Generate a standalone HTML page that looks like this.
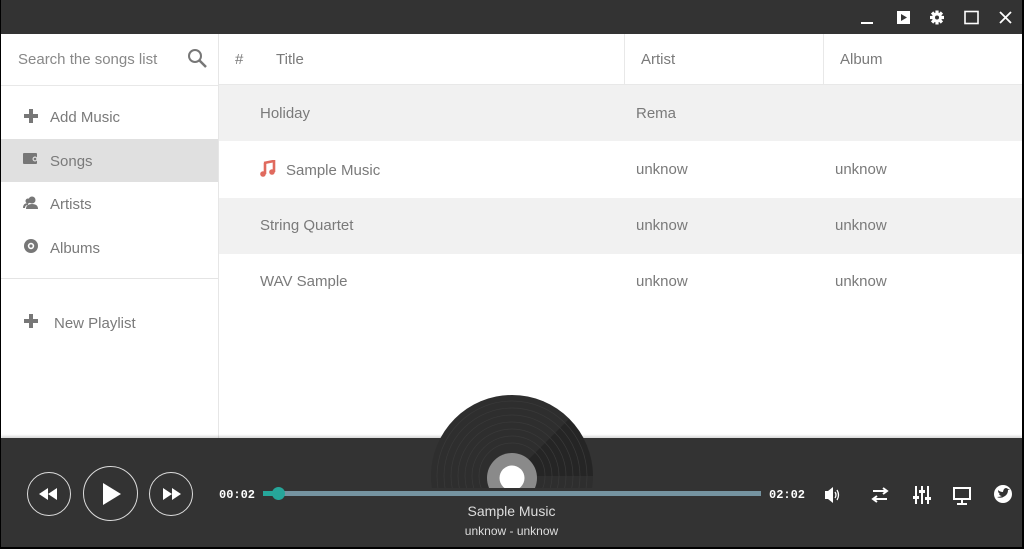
<!DOCTYPE html>
<html><head><meta charset="utf-8"><style>
*{margin:0;padding:0;box-sizing:border-box}
body{width:1024px;height:549px;overflow:hidden;background:#000;font-family:"Liberation Sans",sans-serif;position:relative}
.win{position:absolute;left:1px;top:0;width:1021px;height:547px;background:#fff;overflow:hidden}
.top{position:absolute;left:0;top:0;width:100%;height:34px;background:#333}
.side{position:absolute;left:0;top:34px;width:218px;height:404px;border-right:1px solid #e6e6e6;background:#fff}
.t{position:absolute;color:#7a7a7a;font-size:15px;white-space:nowrap;margin-top:1px}
.hdr{position:absolute;top:34px;height:51px;left:0;width:100%;border-bottom:1px solid #e8e8e8}
.row{position:absolute;left:218px;width:803px;height:56px}
.player{position:absolute;left:0;top:438px;width:100%;height:109px;background:#333;box-shadow:0 -2px 2px rgba(0,0,0,.15)}
.circ{position:absolute;border:1.5px solid #ddd;border-radius:50%}
</style></head><body>
<div class="win">
<div class="top">
 <svg style="position:absolute;left:855px;top:8px" width="160" height="20">
  <rect x="5" y="14" width="12" height="2" fill="#fff"/>
  <rect x="41" y="3" width="13" height="13" fill="#fff"/><path d="M45 6 L51 9.5 L45 13Z" fill="#333"/>
  <g transform="translate(81,9.5)" fill="#fff"><circle r="5"/><g><rect x="-1.6" y="-7" width="3.2" height="14"/><rect x="-1.6" y="-7" width="3.2" height="14" transform="rotate(45)"/><rect x="-1.6" y="-7" width="3.2" height="14" transform="rotate(90)"/><rect x="-1.6" y="-7" width="3.2" height="14" transform="rotate(135)"/></g><circle r="2" fill="#333"/></g>
  <rect x="109" y="3.5" width="13" height="12" fill="none" stroke="#fff" stroke-width="1.6"/>
  <path d="M144 4 L155 15 M155 4 L144 15" stroke="#fff" stroke-width="1.8"/>
 </svg>
</div>
<div class="hdr"></div>
<div class="side">
 <div class="t" style="left:17px;top:16px;color:#888">Search the songs list</div>
 <svg style="position:absolute;left:186px;top:14px" width="22" height="22"><circle cx="8" cy="8" r="6" fill="none" stroke="#777" stroke-width="2"/><path d="M12.5 12.5 L19 19" stroke="#777" stroke-width="2.5"/></svg>
 <div style="position:absolute;left:0;top:51px;width:217px;border-top:1px solid #e8e8e8"></div>
 <svg style="position:absolute;left:22px;top:74px" width="16" height="16"><path d="M6 1h4v5h5v4h-5v5h-4v-5h-5v-4h5z" fill="#777"/></svg>
 <div class="t" style="left:49px;top:74px">Add Music</div>
 <div style="position:absolute;left:0;top:105px;width:217px;height:43px;background:#e0e0e0"></div>
 <svg style="position:absolute;left:22px;top:117px" width="16" height="16"><rect x="0" y="2" width="14" height="11" rx="1" fill="#777"/><circle cx="12" cy="8" r="2.5" fill="#e0e0e0"/><circle cx="12" cy="8" r="1.3" fill="#777"/></svg>
 <div class="t" style="left:49px;top:118px">Songs</div>
 <svg style="position:absolute;left:22px;top:161px" width="16" height="16"><circle cx="9" cy="5" r="3.5" fill="#777"/><path d="M3 14 Q3 9 9 9 Q15 9 15 14Z" fill="#777"/><circle cx="5" cy="6" r="2.5" fill="#777"/><path d="M1 13 Q1 9 5 9" stroke="#777" stroke-width="2" fill="none"/></svg>
 <div class="t" style="left:49px;top:161px">Artists</div>
 <svg style="position:absolute;left:22px;top:204px" width="16" height="16"><circle cx="8" cy="8" r="7" fill="#777"/><circle cx="8" cy="8" r="3.2" fill="#fff"/><circle cx="8" cy="8" r="1.6" fill="#777"/></svg>
 <div class="t" style="left:49px;top:205px">Albums</div>
 <div style="position:absolute;left:0;top:244px;width:217px;border-top:1px solid #e4e4e4"></div>
 <svg style="position:absolute;left:22px;top:279px" width="16" height="16"><path d="M6 1h4v5h5v4h-5v5h-4v-5h-5v-4h5z" fill="#777"/></svg>
 <div class="t" style="left:53px;top:280px">New Playlist</div>
</div>
<div style="position:absolute;left:623px;top:34px;height:51px;border-left:1px solid #e8e8e8"></div>
<div style="position:absolute;left:822px;top:34px;height:51px;border-left:1px solid #e8e8e8"></div>
<div class="t" style="left:234px;top:50px">#</div>
<div class="t" style="left:275px;top:50px">Title</div>
<div class="t" style="left:640px;top:50px">Artist</div>
<div class="t" style="left:839px;top:50px">Album</div>
<div class="row" style="top:85px;background:#f1f1f1"></div>
<div class="row" style="top:198px;background:#f1f1f1"></div>
<div class="t" style="left:259px;top:104px">Holiday</div>
<div class="t" style="left:635px;top:104px">Rema</div>
<svg style="position:absolute;left:259px;top:160px" width="16" height="17"><path d="M4 3 L14 1 V12" stroke="#e06a5e" stroke-width="2.6" fill="none"/><circle cx="3" cy="14" r="2.8" fill="#e06a5e"/><circle cx="12" cy="12" r="2.8" fill="#e06a5e"/><path d="M5 3 V14" stroke="#e06a5e" stroke-width="2.6"/></svg>
<div class="t" style="left:285px;top:161px">Sample Music</div>
<div class="t" style="left:635px;top:160px">unknow</div><div class="t" style="left:834px;top:160px">unknow</div>
<div class="t" style="left:259px;top:216px">String Quartet</div>
<div class="t" style="left:635px;top:216px">unknow</div><div class="t" style="left:834px;top:216px">unknow</div>
<div class="t" style="left:259px;top:272px">WAV Sample</div>
<div class="t" style="left:635px;top:272px">unknow</div><div class="t" style="left:834px;top:272px">unknow</div>
<div class="player"></div>
<svg style="position:absolute;left:429px;top:394px" width="166" height="96">
 <defs><clipPath id="c"><rect width="166" height="94"/></clipPath></defs>
 <g clip-path="url(#c)">
 <circle cx="82" cy="82" r="81" fill="#2e2e2e"/>
 <path d="M82 82 L139 25 A81 81 0 0 1 163 82Z" fill="#252525"/>
 <g fill="none" stroke="#3a3a3a" stroke-width="0.7"><circle cx="82" cy="82" r="75"/><circle cx="82" cy="82" r="68"/><circle cx="82" cy="82" r="61"/><circle cx="82" cy="82" r="54"/><circle cx="82" cy="82" r="47"/><circle cx="82" cy="82" r="40"/><circle cx="82" cy="82" r="33"/></g>
 <circle cx="82" cy="84" r="25" fill="#8a8a8a"/><circle cx="82" cy="84" r="12.5" fill="#fff"/>
 </g>
</svg>
<div class="circ" style="left:26px;top:472px;width:44px;height:44px"></div>
<svg style="position:absolute;left:38px;top:488px" width="20" height="12"><path d="M9 0 L0 6 L9 12Z M18 0 L9 6 L18 12Z" fill="#fff"/></svg>
<div class="circ" style="left:82px;top:466px;width:55px;height:55px"></div>
<svg style="position:absolute;left:101px;top:482px" width="20" height="24"><path d="M1 1 L19 12 L1 23Z" fill="#fff"/></svg>
<div class="circ" style="left:148px;top:472px;width:44px;height:44px"></div>
<svg style="position:absolute;left:162px;top:488px" width="20" height="12"><path d="M0 0 L9 6 L0 12Z M9 0 L18 6 L9 12Z" fill="#fff"/></svg>
<div style="position:absolute;left:218px;top:488px;color:#fff;font:bold 12px 'Liberation Mono',monospace;letter-spacing:0">00:02</div>
<div style="position:absolute;left:262px;top:491px;width:498px;height:5px;background:#7593a0"></div>
<div style="position:absolute;left:262px;top:491px;width:15px;height:5px;background:#26a69a"></div>
<div style="position:absolute;left:271px;top:487px;width:13px;height:13px;border-radius:50%;background:#26a69a"></div>
<div style="position:absolute;left:768px;top:488px;color:#fff;font:bold 12px 'Liberation Mono',monospace">02:02</div>
<div style="position:absolute;left:0;width:1021px;top:503px;text-align:center;color:#ddd;font-size:14px">Sample Music</div>
<div style="position:absolute;left:0;width:1021px;top:524px;text-align:center;color:#ddd;font-size:12px">unknow - unknow</div>
<svg style="position:absolute;left:822px;top:484px" width="200" height="22">
 <path d="M2 7h3l5-4v16l-5-4h-3z" fill="#fff"/><path d="M12 8 Q14 11 12 14 M14 6 Q17 11 14 16" stroke="#fff" stroke-width="1.3" fill="none"/>
 <path d="M50 7h14 M60 4l4 3-4 3 M64 15h-14 M54 12l-4 3 4 3" stroke="#fff" stroke-width="2" fill="none"/>
 <g stroke="#fff" stroke-width="2"><path d="M93 2v18 M99 2v18 M105 2v18"/></g><g fill="#fff"><rect x="90" y="12" width="6" height="3"/><rect x="96" y="6" width="6" height="3"/><rect x="102" y="13" width="6" height="3"/></g>
 <rect x="131" y="4" width="16" height="11" fill="none" stroke="#fff" stroke-width="2"/><path d="M139 15v4 M134 20h10" stroke="#fff" stroke-width="2"/>
 <circle cx="180" cy="10" r="9" fill="#fff"/><path d="M174 13 Q178 15 182 12 Q185 10 185 6 L187 5 L185 5 Q183 3 181 5 Q180 7 180 8 Q177 8 175 6 Q175 9 177 10 L176 10 Q177 12 179 12 Q177 13 174 13Z" fill="#333"/>
</svg>
</div>
</body></html>
